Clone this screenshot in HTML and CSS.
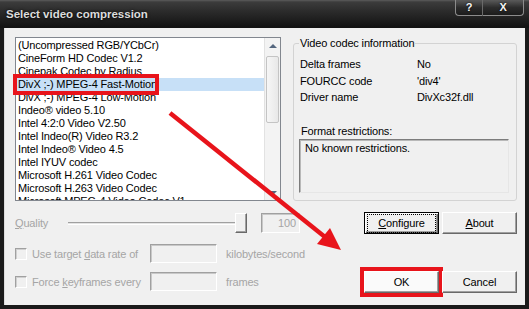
FILE: index.html
```html
<!DOCTYPE html>
<html>
<head>
<meta charset="utf-8">
<link rel="stylesheet" href="styles.css">
</head>
<body>
<div class="window">
  <div class="titlebar">
    <span class="title">Select video compression</span>
    <div class="caption-btns">
      <span class="cbtn help">?</span>
      <span class="cbtn close">X</span>
    </div>
  </div>
  <div class="client">
    <div class="top">
      <div class="listbox">
        <div class="items">
          <div class="item">(Uncompressed RGB/YCbCr)</div>
          <div class="item">CineForm HD Codec V1.2</div>
          <div class="item">Cinepak Codec by Radius</div>
          <div class="item selected">DivX ;-) MPEG-4 Fast-Motion</div>
          <div class="item">DivX ;-) MPEG-4 Low-Motion</div>
          <div class="item">Indeo® video 5.10</div>
          <div class="item">Intel 4:2:0 Video V2.50</div>
          <div class="item">Intel Indeo(R) Video R3.2</div>
          <div class="item">Intel Indeo® Video 4.5</div>
          <div class="item">Intel IYUV codec</div>
          <div class="item">Microsoft H.261 Video Codec</div>
          <div class="item">Microsoft H.263 Video Codec</div>
          <div class="item">Microsoft MPEG-4 Video Codec V1</div>
        </div>
        <div class="vscroll">
          <div class="sb-btn"><span class="tri up"></span></div>
          <div class="sb-track"><div class="sb-thumb"></div></div>
          <div class="sb-btn"><span class="tri down"></span></div>
        </div>
        <div class="mark"></div>
      </div>
      <fieldset class="group">
        <legend>Video codec information</legend>
        <div class="info">
          <span>Delta frames</span><span>No</span>
          <span>FOURCC code</span><span>'div4'</span>
          <span>Driver name</span><span>DivXc32f.dll</span>
        </div>
        <div class="fr-label">Format restrictions:</div>
        <div class="fr-box">No known restrictions.</div>
      </fieldset>
    </div>
    <div class="lower">
      <div class="controls">
        <div class="qrow">
          <span class="dis qlabel"><u>Q</u>uality</span>
          <div class="slider"><div class="track"></div><div class="thumb"></div></div>
          <div class="edit num dis">100</div>
        </div>
        <div class="crow first">
          <span class="chk"></span>
          <span class="dis">Use target <u>d</u>ata rate of</span>
          <div class="edit"></div>
          <span class="dis unit">kilobytes/second</span>
        </div>
        <div class="crow">
          <span class="chk"></span>
          <span class="dis">Force <u>k</u>eyframes every</span>
          <div class="edit"></div>
          <span class="dis unit">frames</span>
        </div>
      </div>
      <div class="buttons">
        <div class="btn default"><span class="focus"><u>C</u>onfigure</span></div>
        <div class="btn"><u>A</u>bout</div>
        <div class="btn ok">OK</div>
        <div class="btn">Cancel</div>
      </div>
    </div>
  </div>
  <svg class="annot" width="529" height="309" viewBox="0 0 529 309">
    <line x1="170" y1="113" x2="325" y2="237" stroke="#e8141b" stroke-width="4.5"/>
    <polygon points="341,250 317,244 330,228" fill="#e8141b"/>
  </svg>
</div>
</body>
</html>
```
FILE: styles.css
```css
html, body {
  margin: 0;
  padding: 0;
  background: #151515;
}
body {
  font-family: "Liberation Sans", Arial, sans-serif;
  font-size: 11px;
  letter-spacing: -0.15px;
  color: #000;
}
.window {
  position: relative;
  width: 529px;
  height: 309px;
  background: #1a1a1a;
  display: flex;
  flex-direction: column;
  overflow: hidden;
}
.titlebar {
  height: 28px;
  flex: none;
  display: flex;
  align-items: flex-start;
  background: linear-gradient(to bottom, #5c5c5c 0px, #3c3c3c 2px, #2a2a2a 12px, #131313 27px);
}
.title {
  margin: 7px 0 0 6px;
  font-weight: bold;
  font-size: 11.5px;
  letter-spacing: 0;
  line-height: 14px;
  color: #dcdcdc;
  text-shadow: 0 0 3px #000;
}
.caption-btns {
  margin-left: auto;
  margin-right: 5px;
  display: flex;
}
.cbtn {
  height: 16px;
  box-sizing: border-box;
  border: 1px solid #8c8c8c;
  border-top: none;
  background: linear-gradient(to bottom, #5a5a5a, #2c2c2c 50%, #1c1c1c);
  color: #f4f4f4;
  font-weight: bold;
  font-size: 11px;
  line-height: 15px;
  text-align: center;
  text-shadow: 0 0 2px #000;
}
.cbtn.help {
  width: 27px;
  border-radius: 0 0 0 4px;
  border-right: none;
}
.cbtn.close {
  width: 42px;
  border-radius: 0 0 4px 0;
  border-left: 1px solid #6a6a6a;
}
.client {
  flex: 1;
  margin: 0 4px 4px 4px;
  background: #f0f0f0;
  padding: 9px 8px 0 11px;
  box-shadow: inset 1px 0 #dcdcdc;
}
.top {
  display: flex;
  height: 164px;
}
.listbox {
  position: relative;
  width: 266px;
  height: 164px;
  box-sizing: border-box;
  border: 1px solid #82878f;
  background: #fff;
  display: flex;
}
.items {
  flex: 1;
  overflow: hidden;
  padding-top: 1px;
}
.item {
  height: 13px;
  line-height: 13px;
  padding-left: 2px;
  white-space: nowrap;
}
.item.selected {
  background: #c7e0f7;
}
.vscroll {
  width: 15px;
  flex: none;
  display: flex;
  flex-direction: column;
  background: #f3f3f3;
  border-left: 1px solid #e2e2e2;
}
.sb-btn {
  height: 15px;
  display: flex;
  align-items: center;
  justify-content: center;
}
.tri {
  width: 0;
  height: 0;
  border-left: 4px solid transparent;
  border-right: 4px solid transparent;
}
.tri.up { border-bottom: 4px solid #55677f; }
.tri.down { border-top: 4px solid #55677f; }
.sb-track {
  flex: 1;
  padding-top: 3px;
}
.sb-thumb {
  margin: 0 1px;
  height: 67px;
  box-sizing: border-box;
  border: 1px solid #c4c4c4;
  border-radius: 2px;
  background: linear-gradient(to right, #f6f6f6, #e8e8e8);
}
.mark {
  position: absolute;
  left: -3px;
  top: 36px;
  width: 146px;
  height: 21px;
  box-sizing: border-box;
  border: 4px solid #e8141b;
}
.group {
  margin: 0 0 0 12px;
  padding: 0 7px 0 5px;
  width: 224px;
  height: 164px;
  box-sizing: border-box;
  border: 1px solid #d3d3d3;
  border-radius: 3px;
  min-width: 0;
}
.group legend {
  padding: 0 1px;
  line-height: 13px;
}
.info {
  display: grid;
  grid-template-columns: 117px auto;
  grid-auto-rows: 16.5px;
  margin-top: 6px;
  margin-left: 1px;
}
.info span {
  line-height: 16px;
}
.fr-label {
  margin-top: 18px;
  margin-left: 2px;
  line-height: 14px;
}
.fr-box {
  margin-top: 1px;
  height: 54px;
  box-sizing: border-box;
  border: 1px solid;
  border-color: #7c7c7c #e6e6e6 #e6e6e6 #7c7c7c;
  box-shadow: inset 1px 1px #b8b8b8;
  padding: 2px 0 0 5px;
  line-height: 13px;
}
.lower {
  display: flex;
  margin-top: 11px;
}
.controls {
  flex: 1;
}
.dis {
  color: #a5a5a5;
}
.qrow {
  display: flex;
  align-items: center;
  height: 20px;
  margin-top: 1px;
}
.qlabel {
  width: 53px;
}
.slider {
  position: relative;
  width: 179px;
  height: 20px;
}
.slider .track {
  margin-top: 9px;
  width: 172px;
  height: 1px;
  border-top: 1px solid #a0a0a0;
  border-bottom: 1px solid #fff;
  background: #e3e3e3;
}
.slider .thumb {
  position: absolute;
  right: 0;
  top: 0;
  width: 12px;
  height: 20px;
  box-sizing: border-box;
  border: 1px solid;
  border-color: #fff #696969 #696969 #fff;
  box-shadow: inset -1px -1px #a0a0a0;
  background: #f0f0f0;
}
.edit {
  height: 19px;
  box-sizing: border-box;
  border: 1px solid;
  border-color: #a0a0a0 #ffffff #ffffff #a0a0a0;
  box-shadow: inset 1px 1px #c8c8c8;
  background: #f0f0f0;
}
.edit.num {
  margin-left: 14px;
  width: 39px;
  height: 20px;
  text-align: right;
  padding-right: 3px;
  line-height: 18px;
}
.crow {
  display: grid;
  grid-template-columns: 17px 118px 67px auto;
  align-items: center;
  margin-top: 9px;
  height: 19px;
}
.crow.first {
  margin-top: 11px;
}
.crow .edit {
  width: 67px;
}
.chk {
  width: 12px;
  height: 12px;
  box-sizing: border-box;
  border: 1px solid;
  border-color: #a0a0a0 #fff #fff #a0a0a0;
  box-shadow: inset 1px 1px #d0d0d0;
}
.unit {
  padding-left: 9px;
}
.buttons {
  display: grid;
  grid-template-columns: 75px 75px;
  grid-template-rows: 22px 22px;
  column-gap: 3px;
  row-gap: 37px;
  margin-top: 0;
}
.btn {
  box-sizing: border-box;
  border: 1px solid;
  border-color: #fff #696969 #696969 #fff;
  box-shadow: inset -1px -1px #a0a0a0;
  background: #f0f0f0;
  display: flex;
  align-items: center;
  justify-content: center;
  line-height: 13px;
}
.btn.default {
  border: 1px solid #000;
  box-shadow: inset 1px 1px #fff, inset -1px -1px #696969, inset -2px -2px #a0a0a0;
}
.btn .focus {
  outline: 1px dotted #000;
  outline-offset: 0;
  padding: 2px 3px;
  width: 61px;
  text-align: center;
}
.btn.ok {
  outline: 4px solid #e8141b;
  outline-offset: 0;
  background: #fafafa;
}
.annot {
  position: absolute;
  left: 0;
  top: 0;
  pointer-events: none;
}
```
